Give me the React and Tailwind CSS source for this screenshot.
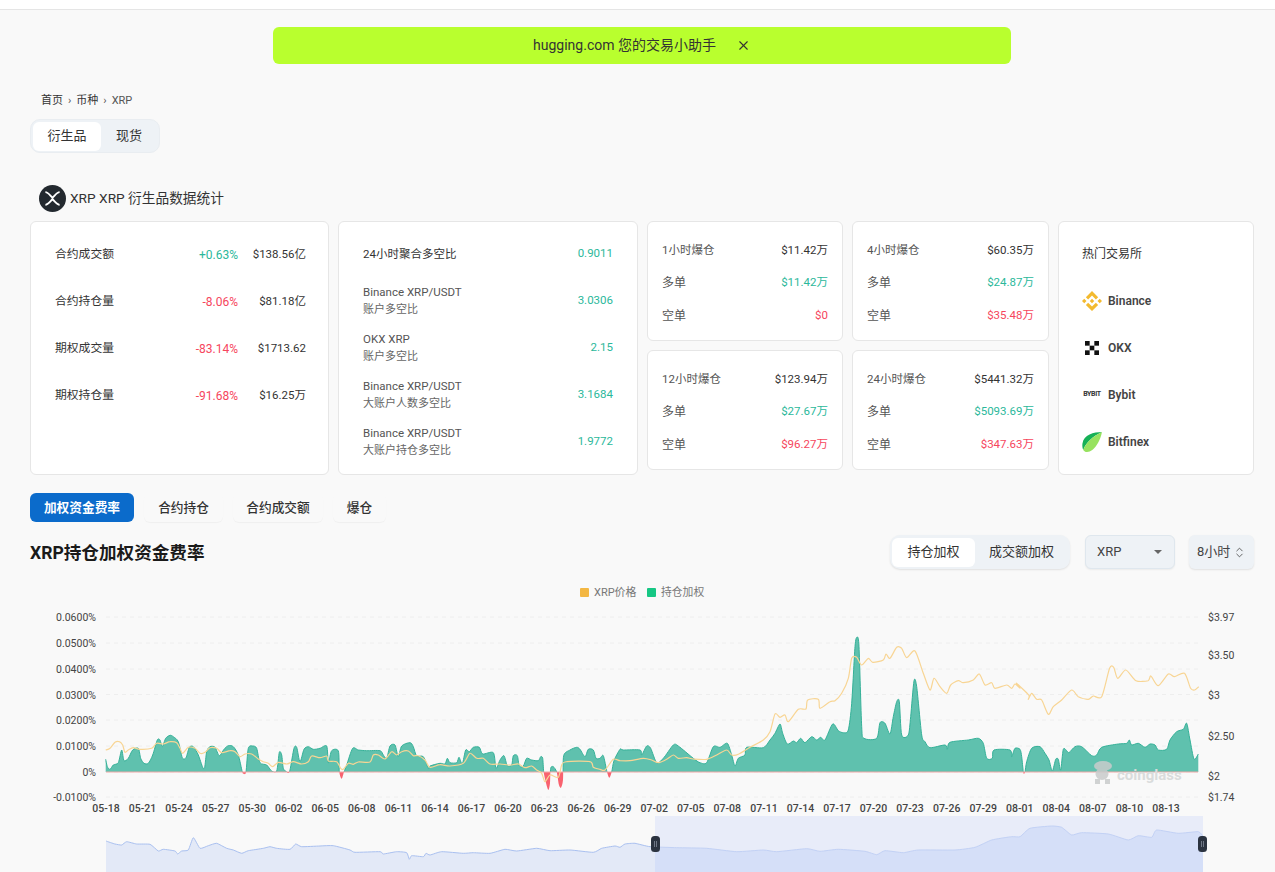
import React from "react";
import { X, ChevronsUpDown } from "lucide-react";

const UP = "text-[#2bb89b]";
const DOWN = "text-[#f6465d]";

const z6 = (a) => a.map(([x, y]) => [x / 3, 690 + y / 3]);
const z7 = (a) => a.map(([x, y]) => [430 + x / 3, 690 + y / 3]);
const z8 = (a) => a.map(([x, y]) => [845 + x / 3, 690 + y / 3]);
const z9 = (a) => a.map(([x, y]) => [720 + x / 3, 610 + y / 3]);
const z5 = (a) => a.map(([x, y]) => [640 + x / 2.47, 520 + y / 3]);

function smooth(pts, k = 0.8) {
  let d = `M${pts[0][0].toFixed(1)} ${pts[0][1].toFixed(1)}`;
  for (let i = 0; i < pts.length - 1; i++) {
    const p0 = pts[Math.max(0, i - 1)];
    const p1 = pts[i];
    const p2 = pts[i + 1];
    const p3 = pts[Math.min(pts.length - 1, i + 2)];
    const c1x = p1[0] + ((p2[0] - p0[0]) / 6) * k;
    const c1y = p1[1] + ((p2[1] - p0[1]) / 6) * k;
    const c2x = p2[0] - ((p3[0] - p1[0]) / 6) * k;
    const c2y = p2[1] - ((p3[1] - p1[1]) / 6) * k;
    d += `C${c1x.toFixed(1)} ${c1y.toFixed(1)} ${c2x.toFixed(1)} ${c2y.toFixed(1)} ${p2[0].toFixed(1)} ${p2[1].toFixed(1)}`;
  }
  return d;
}

const areaPts = [
  ...z6([[317,208],[322,230],[330,238],[340,225],[355,218],[365,180],[372,212],[385,205],[398,180],[415,175],[422,205],[432,220],[445,220],[458,195],[472,150],[480,150],[487,170],[497,145],[510,136],[520,140],[535,155],[547,203],[558,203],[568,172],[580,170],[595,195],[608,232],[614,232],[620,185],[630,170],[645,172],[658,197],[672,178],[685,167],[700,170],[715,195],[727,246],[732,251],[738,246],[745,175],[758,168],[770,175],[780,218],[800,225],[815,243],[830,243],[838,187],[845,195],[850,235],[860,246],[865,249],[870,240],[882,175],[890,172],[900,215],[912,178],[925,170],[940,178],[960,175],[980,168],[985,218],[995,182],[1015,183],[1018,246],[1025,266],[1032,246],[1040,225],[1058,175],[1075,180],[1100,182],[1140,182],[1150,195],[1160,205],[1170,168],[1185,165],[1195,200],[1205,168],[1230,158],[1240,170],[1250,198],[1270,200],[1285,235]]),
  ...z7([[0,228],[30,220],[45,222],[52,205],[60,218],[80,218],[87,202],[97,222],[107,180],[118,185],[130,172],[148,172],[158,192],[190,188],[198,235],[210,210],[222,197],[232,227],[245,225],[250,197],[262,197],[268,228],[280,228],[290,205],[305,210],[325,212],[332,200],[338,205],[341,246],[347,275],[355,300],[360,280],[362,235],[370,230],[380,246],[387,285],[393,293],[399,270],[401,197],[420,180],[440,172],[450,178],[465,200],[475,178],[490,180],[498,205],[510,205],[520,197],[531,246],[538,263],[545,246],[552,212],[570,178],[580,180],[630,180],[635,195],[650,168],[662,175],[680,218],[700,205],[730,165],[745,168],[790,205],[810,218],[830,218],[850,170],[870,172],[892,160],[905,195],[915,228],[925,205],[945,195],[950,172],[1000,173],[1020,150],[1035,130],[1050,102],[1058,130],[1072,162],[1090,153],[1100,158],[1112,145],[1125,158],[1145,140],[1160,150],[1172,142],[1185,150],[1208,102],[1225,122]]),
  ...z9([[370,368],[385,360],[395,280],[405,110],[411,82],[417,110],[425,350],[432,385],[470,385],[480,338],[495,340],[510,372],[520,320],[530,275],[538,275],[545,375],[565,375],[572,320],[582,213],[590,230],[605,375]]),
  ...z8([[240,155],[255,173],[300,165],[307,178],[315,157],[370,150],[400,145],[415,160],[425,205],[442,205],[447,180],[495,180],[500,200],[510,175],[525,178],[530,200],[535,246],[537,251],[540,246],[545,215],[560,175],[585,170],[600,190],[612,210],[622,243],[632,208],[640,208],[647,240],[655,178],[665,182],[672,188],[690,170],[710,170],[740,197],[755,195],[770,172],[820,162],[845,160],[853,150],[860,165],[880,160],[900,172],[915,162],[930,165],[940,180],[965,178],[975,150],[995,125],[1015,118],[1025,100],[1035,150],[1047,207],[1060,192]]),
];

const pricePts = [
  ...z6([[317,180],[330,175],[345,157],[358,155],[368,165],[375,187],[385,180],[400,173],[420,178],[455,175],[470,160],[490,162],[510,155],[530,158],[540,175],[548,190],[565,172],[585,175],[600,190],[615,187],[630,173],[650,175],[665,188],[690,182],[705,185],[720,200],[735,192],[755,192],[775,207],[790,215],[805,220],[818,230],[835,217],[860,222],[880,215],[905,222],[925,215],[935,198],[960,203],[980,198],[985,213],[1010,215],[1022,235],[1030,238],[1045,220],[1060,223],[1075,216],[1110,216],[1120,195],[1135,195],[1155,207],[1175,185],[1190,195],[1205,185],[1225,183],[1240,197],[1255,197],[1275,210]]),
  ...z7([[0,232],[30,224],[60,228],[100,220],[120,190],[140,205],[160,205],[180,222],[210,222],[240,225],[265,222],[285,233],[305,228],[320,240],[335,250],[345,275],[360,255],[385,262],[395,225],[410,215],[480,215],[490,232],[510,238],[525,240],[550,208],[570,212],[600,212],[640,205],[665,210],[685,218],[710,208],[730,195],[745,205],[770,203],[790,207],[830,208],[860,195],[890,180],[905,195],[925,193],[960,172],[1000,150],[1020,125]]),
  ...z9([[165,312],[180,322],[195,315],[205,335],[235,298],[258,297],[263,270],[295,268],[300,295],[330,275],[345,272],[365,250],[385,205],[395,145],[410,142],[425,165],[445,145],[458,157],[490,150],[498,132],[510,145],[530,112],[545,115],[560,143],[585,123],[610,190],[630,240],[642,205],[660,230],[680,250],[692,225],[715,212],[730,218],[760,210],[778,192],[795,225],[815,218],[825,235],[860,225],[875,235],[885,222],[900,235]]),
  ...z5([[930,490],[960,525]]),
  ...z8([[550,28],[560,10],[575,28],[590,30],[610,73],[625,50],[650,30],[680,0],[700,20],[730,28],[745,18],[770,20]]),
  ...z5([[1160,445],[1170,442],[1180,475],[1200,450],[1225,482],[1255,482],[1262,468],[1280,497],[1305,462],[1320,470],[1345,460],[1360,505],[1370,510],[1380,500]]),
];

const navPts = [
  ...z6([[318,453],[345,462],[365,465],[380,455],[410,462],[450,463],[475,483],[490,478],[525,483],[533,492],[545,483],[565,480],[580,443],[600,475],[625,467],[650,460],[680,475],[700,480],[725,490],[745,482],[790,475],[810,470],[830,475],[870,478],[887,462],[905,470],[960,468],[1000,467],[1050,480],[1065,487],[1140,485],[1150,492],[1190,485],[1220,488],[1228,508],[1235,497],[1270,500],[1278,490]]),
  ...z7([[0,495],[35,485],[100,490],[130,488],[180,490],[225,478],[260,483],[320,475],[360,482],[420,480],[490,487],[515,475],[555,468],[570,472],[585,462],[615,460],[660,470],[740,473],[830,475],[920,485],[1000,480],[1040,485],[1130,476],[1170,484],[1225,478]]),
  ...z8([[60,484],[95,494],[120,482],[175,488],[220,480],[330,480],[390,472],[440,450],[500,440],[525,440],[555,415],[620,408],[650,412],[680,435],[710,428],[790,432],[850,450],[880,437],[920,442],[935,420],[1000,430],[1060,425],[1075,440]]),
];

const dates = ["05-18","05-21","05-24","05-27","05-30","06-02","06-05","06-08","06-11","06-14","06-17","06-20","06-23","06-26","06-29","07-02","07-05","07-08","07-11","07-14","07-17","07-20","07-23","07-26","07-29","08-01","08-04","08-07","08-10","08-13"];
const leftAxis = [["0.0600%",617],["0.0500%",643],["0.0400%",669],["0.0300%",694.5],["0.0200%",720],["0.0100%",746],["0%",772],["-0.0100%",797]];
const rightAxis = [["$3.97",617],["$3.50",655],["$3",695],["$2.50",736],["$2",776],["$1.74",797]];

function Chart() {
  const line = smooth(areaPts);
  const area = `${line}L1198.3 772L105.7 772Z`;
  const nav = smooth(navPts, 0.5);
  const navArea = `${nav}L1203 872L106 872Z`;
  return (
    <svg viewBox="0 580 1275 292" width="1275" height="292" className="block">
      <defs>
        <clipPath id="above"><rect x="0" y="580" width="1275" height="192" /></clipPath>
        <clipPath id="below"><rect x="0" y="772" width="1275" height="40" /></clipPath>
        <clipPath id="navleft"><rect x="100" y="810" width="555" height="62" /></clipPath>
        <clipPath id="navright"><rect x="655" y="810" width="548" height="62" /></clipPath>
      </defs>
      <rect x="580" y="588" width="9" height="9" rx="1" fill="#f3b743" />
      <text x="594" y="596" fontSize="11" fill="#777">XRP价格</text>
      <rect x="647" y="588" width="9" height="9" rx="1" fill="#16c784" />
      <text x="661" y="596" fontSize="10.8" fill="#777">持仓加权</text>

      {leftAxis.map(([t, y]) => (
        <g key={t}>
          <line x1="106" x2="1199" y1={y} y2={y} stroke="#eeeeee" strokeDasharray="4 4" />
          <text x="96" y={y + 4} fontSize="10.5" fill="#444" textAnchor="end">{t}</text>
        </g>
      ))}
      {rightAxis.map(([t, y]) => (
        <text key={t} x="1208" y={y + 4} fontSize="10.5" fill="#444">{t}</text>
      ))}
      {dates.map((t, i) => (
        <text key={t} x={106 + i * 36.55} y="812" fontSize="10.5" fontWeight="500" fill="#444" textAnchor="middle">{t}</text>
      ))}

      <g clipPath="url(#above)">
        <path d={area} fill="#5fc1ae" />
        <path d={line} fill="none" stroke="#35b198" strokeWidth="1" />
      </g>
      <g clipPath="url(#below)">
        <path d={area} fill="#f9626f" />
      </g>
      <line x1="106" x2="1198" y1="772" y2="772" stroke="#f3a9a9" strokeWidth="1" />
      <path d={smooth(pricePts)} fill="none" stroke="#f8d594" strokeWidth="1.2" />

      <g fill="#c9cccc" opacity="0.85">
        <ellipse cx="1103" cy="766" rx="9" ry="5" />
        <ellipse cx="1102" cy="774" rx="6.5" ry="6" />
        <rect x="1095" y="779" width="5" height="5" />
        <rect x="1105" y="779" width="5" height="5" />
      </g>
      <text x="1117" y="780" fontSize="15" fontWeight="700" fill="#d9dcdc">coinglass</text>

      <rect x="655" y="816" width="548" height="56" fill="#e8ecf9" />
      <path d={navArea} fill="#e3e9f7" clipPath="url(#navleft)" />
      <path d={navArea} fill="#d5dff8" clipPath="url(#navright)" />
      <path d={nav} fill="none" stroke="#a9c0f0" strokeWidth="1" clipPath="url(#navleft)" />
      <path d={nav} fill="none" stroke="#c2d1f5" strokeWidth="1" clipPath="url(#navright)" />
      {[651, 1198].map((x) => (
        <g key={x}>
          <rect x={x} y="836" width="9" height="16" rx="3.5" fill="#2b3340" />
          <rect x={x + 3} y="841" width="1" height="6" fill="#6f7786" />
          <rect x={x + 5} y="841" width="1" height="6" fill="#6f7786" />
        </g>
      ))}
    </svg>
  );
}

function Card({ className, children }) {
  return <div className={`bg-white border border-[#e6e6e6] rounded-md ${className}`}>{children}</div>;
}

function StatRow({ label, pct, up, value }) {
  return (
    <div className="h-[47px] flex items-center text-xs">
      <span className="flex-1 text-[#333] text-[11.8px]">{label}</span>
      <span className={`text-xs ${up ? UP : DOWN}`}>{pct}</span>
      <span className="w-[68px] text-right text-[#333] text-[11.5px]">{value}</span>
    </div>
  );
}

function RatioRow({ lines, value }) {
  return (
    <div className="h-[47px] flex items-center justify-between text-[11.5px]">
      <div className="leading-[18px]">
        {lines.map((l, i) => (
          <div key={l} className={lines.length === 1 ? "text-[#333]" : i === 0 ? "text-[#555]" : "text-[#666] text-[11px]"}>{l}</div>
        ))}
      </div>
      <span className={UP}>{value}</span>
    </div>
  );
}

function LiqCard({ title, total, long, short }) {
  return (
    <Card className="h-[120px] pl-[14px] pr-[14px] pt-[11px]">
      <div className="h-[33px] flex items-center justify-between text-[11.5px] pt-[2px]">
        <span className="text-[#555]">{title}</span>
        <span className="text-[#333]">{total}</span>
      </div>
      <div className="h-[33px] flex items-center justify-between text-[11.5px]">
        <span className="text-[#555] text-xs">多单</span>
        <span className={UP}>{long}</span>
      </div>
      <div className="h-[33px] flex items-center justify-between text-[11.5px]">
        <span className="text-[#555] text-xs">空单</span>
        <span className={DOWN}>{short}</span>
      </div>
    </Card>
  );
}

function Binance() {
  return (
    <svg viewBox="0 0 32 32" className="w-[20px] h-[22px] shrink-0" fill="#f3ba2f">
      <path d="M9.8 13.4 16 7.2l6.2 6.2 3.6-3.6L16 0 6.2 9.8zM0 16l3.6-3.6L7.2 16l-3.6 3.6zM9.8 18.6 16 24.8l6.2-6.2 3.6 3.6L16 32l-9.8-9.8zM24.8 16l3.6-3.6L32 16l-3.6 3.6zM19.6 16 16 12.4 13.3 15.1l-.9.9L16 19.6z" />
    </svg>
  );
}
function Okx() {
  return (
    <svg viewBox="0 0 24 24" className="w-[20px] h-[14px] shrink-0" preserveAspectRatio="xMidYMid meet" fill="#111">
      <rect x="0" y="0" width="8" height="8" /><rect x="16" y="0" width="8" height="8" />
      <rect x="8" y="8" width="8" height="8" />
      <rect x="0" y="16" width="8" height="8" /><rect x="16" y="16" width="8" height="8" />
    </svg>
  );
}
function Bitfinex() {
  return (
    <svg viewBox="0 0 24 24" className="w-[20px] h-[22px] shrink-0">
      <path d="M24 0C14 0 2 3 .5 14c-.3 2.500 0 5 1 7.500C5 12 13 5.500 24 0z" fill="#16b157" />
      <path d="M24 0C22 10 15 24 6 24c-2 0-3.500-1-4.500-2.500C5 12 13 5.500 24 0z" fill="#97e25f" />
    </svg>
  );
}

function Exchange({ icon, name }) {
  return (
    <div className="h-[47px] flex items-center gap-[6px]">
      {icon}
      <span className="text-xs font-semibold text-[#444]">{name}</span>
    </div>
  );
}

export default function App() {
  return (
    <div className="w-[1275px] h-[872px] overflow-hidden bg-[#f9f9f9] font-['Roboto','Noto_Sans_CJK_SC',sans-serif]">
      <div className="h-[10px] bg-white border-b border-[#e5e5e5]" />

      <div className="mt-[17px] ml-[273px] w-[738px] h-[37px] rounded-md bg-[#b9ff2e] flex items-center justify-center gap-[20px] text-sm text-[#333] pb-[1px]">
        <span>hugging.com 您的交易小助手</span>
        <X size={15} strokeWidth={1.75} />
      </div>

      <div className="mt-[30px] ml-[41px] h-[14px] flex items-center gap-[5px] text-[11px] text-[#555]">
        <span className="text-[#333]">首页</span><span>›</span><span className="text-[#333]">币种</span><span>›</span><span>XRP</span>
      </div>

      <div className="mt-[11px] ml-[30px] w-[130px] h-[34px] rounded-[10px] bg-[#eef2f6] border border-[#e9edf1] flex items-center px-[2px] text-[13px] text-[#333]">
        <div className="w-[68px] h-[29px] bg-white rounded-md flex items-center justify-center">衍生品</div>
        <div className="flex-1 flex items-center justify-center">现货</div>
      </div>

      <div className="mt-[32px] ml-[39px] h-[27px] flex items-center gap-[4px] text-[13.7px] text-[#333]">
        <div className="w-[27px] h-[27px] rounded-full bg-[#23292f] flex items-center justify-center">
          <svg viewBox="0 0 24 24" className="w-[19px] h-[19px]" fill="none" stroke="#fff" strokeWidth="2.4">
            <path d="M3 4c3 0 5 3 9 7 4-4 6-7 9-7M3 20c3 0 5-3 9-7 4 4 6 7 9 7" />
          </svg>
        </div>
        <span>XRP XRP 衍生品数据统计</span>
      </div>

      <div className="mt-[9px] ml-[30px] w-[1224px] flex gap-[9px] items-start">
        <Card className="w-[299px] h-[254px] pt-[9px] pl-[24px] pr-[22px]">
          <StatRow label="合约成交额" pct="+0.63%" up value="$138.56亿" />
          <StatRow label="合约持仓量" pct="-8.06%" value="$81.18亿" />
          <StatRow label="期权成交量" pct="-83.14%" value="$1713.62" />
          <StatRow label="期权持仓量" pct="-91.68%" value="$16.25万" />
        </Card>
        <Card className="w-[300px] h-[254px] pt-[8px] pl-[24px] pr-[24px]">
          <RatioRow lines={["24小时聚合多空比"]} value="0.9011" />
          <RatioRow lines={["Binance XRP/USDT", "账户多空比"]} value="3.0306" />
          <RatioRow lines={["OKX XRP", "账户多空比"]} value="2.15" />
          <RatioRow lines={["Binance XRP/USDT", "大账户人数多空比"]} value="3.1684" />
          <RatioRow lines={["Binance XRP/USDT", "大账户持仓多空比"]} value="1.9772" />
        </Card>
        <div className="w-[402px] grid grid-cols-[196px_197px] gap-[9px]">
          <LiqCard title="1小时爆仓" total="$11.42万" long="$11.42万" short="$0" />
          <LiqCard title="4小时爆仓" total="$60.35万" long="$24.87万" short="$35.48万" />
          <LiqCard title="12小时爆仓" total="$123.94万" long="$27.67万" short="$96.27万" />
          <LiqCard title="24小时爆仓" total="$5441.32万" long="$5093.69万" short="$347.63万" />
        </div>
        <Card className="w-[196px] h-[254px] pt-[8px] pl-[23px]">
          <div className="h-[47px] flex items-center text-xs text-[#333]">热门交易所</div>
          <Exchange icon={<Binance />} name="Binance" />
          <Exchange icon={<Okx />} name="OKX" />
          <Exchange
            icon={<span className="w-[20px] shrink-0 text-center text-[7px] font-bold tracking-tighter text-[#333]">BYBIT</span>}
            name="Bybit"
          />
          <Exchange icon={<Bitfinex />} name="Bitfinex" />
        </Card>
      </div>

      <div className="mt-[18px] ml-[30px] flex gap-[10px] text-[12.7px] font-medium text-[#333]">
        <div className="w-[104px] h-[29px] rounded-md bg-[#0b6bcb] text-white font-bold flex items-center justify-center">加权资金费率</div>
        <div className="w-[79px] h-[29px] rounded-md shadow-[0_1px_1px_rgba(0,0,0,0.04)] flex items-center justify-center">合约持仓</div>
        <div className="w-[90px] h-[29px] rounded-md shadow-[0_1px_1px_rgba(0,0,0,0.04)] flex items-center justify-center">合约成交额</div>
        <div className="w-[53px] h-[29px] rounded-md shadow-[0_1px_1px_rgba(0,0,0,0.04)] flex items-center justify-center">爆仓</div>
      </div>

      <div className="mt-[13px] ml-[30px] w-[1224px] h-[34px] flex items-center">
        <h2 className="flex-1 text-[17.6px] font-bold text-[#1a1a1a] pt-[2px]">XRP持仓加权资金费率</h2>
        <div className="w-[180px] h-[34px] rounded-[10px] bg-[#eef2f6] shadow-[0_1px_2px_rgba(0,0,0,0.1)] flex items-center px-[2px] text-[13px] text-[#333]">
          <div className="w-[83px] h-[29px] bg-white rounded-md flex items-center justify-center">持仓加权</div>
          <div className="flex-1 flex items-center justify-center">成交额加权</div>
        </div>
        <div className="ml-[15px] w-[90px] h-[34px] rounded-md bg-[#eef2f6] border border-[#dfe7ee] shadow-[0_1px_2px_rgba(0,0,0,0.06)] flex items-center justify-between pl-[11px] pr-[12px] text-[13px] text-[#444]">
          <span>XRP</span>
          <span className="w-0 h-0 border-x-[4px] border-x-transparent border-t-[4px] border-t-[#666]" />
        </div>
        <div className="ml-[14px] w-[65px] h-[34px] rounded-md bg-[#eef2f6] shadow-[0_1px_2px_rgba(0,0,0,0.1)] flex items-center justify-between pl-[8px] pr-[8px] text-[13px] text-[#444]">
          <span>8小时</span>
          <ChevronsUpDown size={13} strokeWidth={1.5} />
        </div>
      </div>

      <div className="mt-[11px]">
        <Chart />
      </div>
    </div>
  );
}
